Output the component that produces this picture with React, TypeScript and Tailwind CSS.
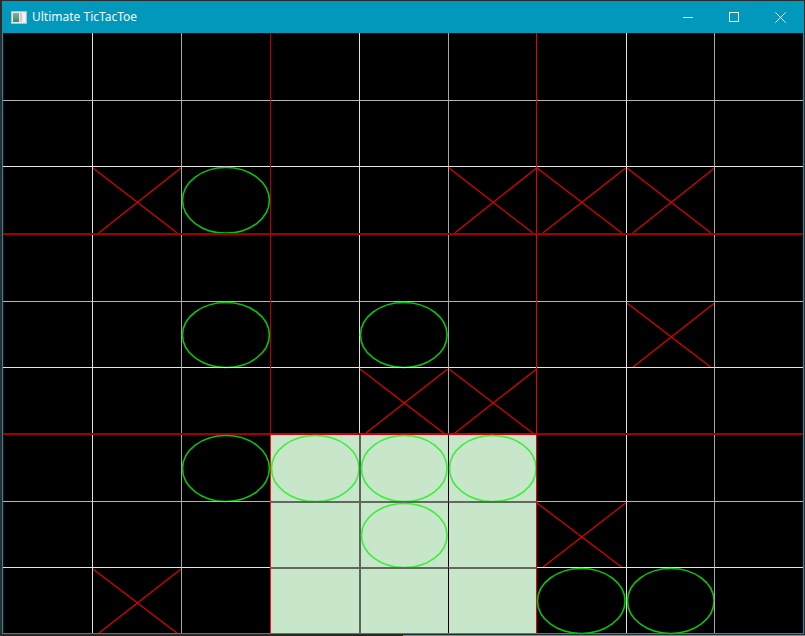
import React from "react"

type Mark = "." | "x" | "o"

const board: string[] = [
  ".........",
  ".........",
  ".xo..xxx.",
  ".........",
  "..o.o..x.",
  "....xx...",
  "..oooo...",
  "....o.x..",
  ".x....oo.",
]

// sub-board that is currently in play
const HOT = { R: 2, C: 1 }

const vLine = ["", "border-l border-l-[#e0e0e0]", "border-l border-l-[#a8a8a8]"]
const hLine = ["", "border-t border-t-[#b4b4b4]", "border-t border-t-[#e6e6e6]"]
const vLineHot = ["", "border-l-2 border-l-[#5d665d]", "border-l border-l-[#000000]"]
const hLineHot = ["", "border-t-2 border-t-[#606860]", "border-t-2 border-t-[#606860]"]

function Cell({ mark, r, c, hot }: { mark: Mark; r: number; c: number; hot: boolean }) {
  const lines = hot ? `${vLineHot[c]} ${hLineHot[r]}` : `${vLine[c]} ${hLine[r]}`
  return (
    <div className={`min-h-0 min-w-0 ${lines}`}>
      {mark !== "." && (
        <svg className="block h-full w-full overflow-visible" viewBox="0 0 88 66" preserveAspectRatio="none">
          {mark === "x" ? (
            <g stroke="#e00000" strokeWidth={1.2}>
              <line x1={0} y1={1} x2={84} y2={66} vectorEffect="non-scaling-stroke" />
              <line x1={6} y1={66} x2={88} y2={1} vectorEffect="non-scaling-stroke" />
            </g>
          ) : (
            <ellipse
              cx={44}
              cy={33.5}
              rx={43.5}
              ry={33}
              fill="none"
              stroke={hot ? "#3cee3c" : "#0cc00c"}
              strokeWidth={1.6}
              vectorEffect="non-scaling-stroke"
            />
          )}
        </svg>
      )}
    </div>
  )
}

function SubBoard({ R, C }: { R: number; C: number }) {
  const hot = R === HOT.R && C === HOT.C
  let edges = ""
  if (C === 1) edges += hot ? " border-l border-l-[#ff1414]" : " border-l border-l-[#b80000]"
  if (C === 2) edges += " border-l border-l-[#e80000]"
  if (R > 0) edges += hot ? " border-t-2 border-t-[#d00000]" : " border-t-2 border-t-[#a00000]"
  const cells = []
  for (let r = 0; r < 3; r++) {
    for (let c = 0; c < 3; c++) {
      const mark = board[R * 3 + r][C * 3 + c] as Mark
      cells.push(<Cell key={`${r}-${c}`} mark={mark} r={r} c={c} hot={hot} />)
    }
  }
  return (
    <div className={`grid min-h-0 min-w-0 grid-cols-3 grid-rows-3 ${hot ? "bg-[#c8e6c9]" : "bg-black"}${edges}`}>
      {cells}
    </div>
  )
}

function WindowIcon() {
  return (
    <svg width="16" height="13" viewBox="0 0 16 13">
      <defs>
        <linearGradient id="pane" x1="0" y1="0" x2="0" y2="1">
          <stop offset="0" stopColor="#7fb2a0" />
          <stop offset="1" stopColor="#3f8a6a" />
        </linearGradient>
      </defs>
      <rect x="0.5" y="0.5" width="15" height="12" fill="#e8e8e8" stroke="#bdbdbd" />
      <rect x="2" y="2" width="6" height="9" fill="url(#pane)" />
      <rect x="9" y="2" width="2" height="9" fill="#cfcfcf" />
      <rect x="12" y="2" width="2" height="9" fill="#f4f4f4" />
    </svg>
  )
}

export default function App() {
  const subs = []
  for (let R = 0; R < 3; R++) {
    for (let C = 0; C < 3; C++) {
      subs.push(<SubBoard key={`${R}-${C}`} R={R} C={C} />)
    }
  }

  return (
    <div className="flex h-[636px] w-[805px] flex-col bg-[#2b2b2b] pt-px">
      {/* window */}
      <div className="ml-[2px] flex w-[802px] flex-col border-x border-b border-[#0099bb] bg-[#0099bb]">
        {/* title bar */}
        <div className="flex h-8 items-center bg-[#0099bb] text-[12px] text-[#f2f8fa] [font-family:'Noto_Sans',sans-serif]">
          <div className="ml-[8px] mt-px flex items-center">
            <WindowIcon />
          </div>
          <span className="ml-[5px]">Ultimate TicTacToe</span>
          <div className="ml-auto flex h-full">
            <div className="flex w-[46px] items-center justify-center">
              <svg width="10" height="10" viewBox="0 0 10 10">
                <line x1="0" y1="5.5" x2="10" y2="5.5" stroke="#ffffff" strokeWidth="1" />
              </svg>
            </div>
            <div className="flex w-[46px] items-center justify-center">
              <svg width="10" height="10" viewBox="0 0 10 10">
                <rect x="0.5" y="0.5" width="9" height="9" fill="none" stroke="#ffffff" strokeWidth="1" />
              </svg>
            </div>
            <div className="flex w-[46px] items-center justify-center">
              <svg width="11" height="11" viewBox="0 0 11 11">
                <line x1="0.5" y1="0.5" x2="10.5" y2="10.5" stroke="#ffffff" strokeWidth="1" />
                <line x1="10.5" y1="0.5" x2="0.5" y2="10.5" stroke="#ffffff" strokeWidth="1" />
              </svg>
            </div>
          </div>
        </div>

        {/* game board */}
        <div className="grid h-[600px] w-[800px] grid-cols-3 grid-rows-3 bg-black">{subs}</div>
      </div>

      {/* taskbar edge */}
      <div className="mt-px flex h-[2px]">
        <div className="w-[403px] bg-[#262626]" />
        <div className="flex-1 bg-[#1fb5c6]" />
      </div>
    </div>
  )
}
